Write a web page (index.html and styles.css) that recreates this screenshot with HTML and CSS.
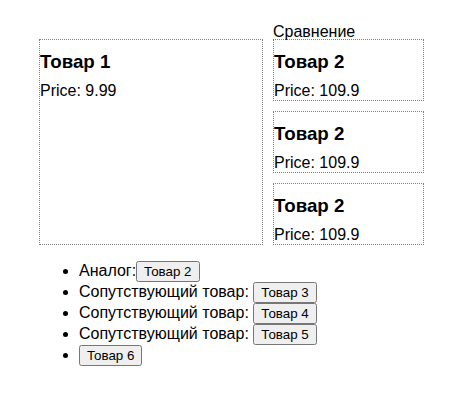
FILE: index.html
```html
<!DOCTYPE html>
<html lang="ru">
<head>
<meta charset="utf-8">
<title>Товары</title>
<link rel="stylesheet" href="styles.css">
</head>
<body>
<div class="page">
  <div class="row">
    <div class="card main">
      <h3 class="title">Товар 1</h3>
      <p class="price">Price: 9.99</p>
    </div>
    <div class="compare">
      <div class="compare-label">Сравнение</div>
      <div class="card">
        <h3 class="title">Товар 2</h3>
        <p class="price">Price: 109.9</p>
      </div>
      <div class="card">
        <h3 class="title">Товар 2</h3>
        <p class="price">Price: 109.9</p>
      </div>
      <div class="card">
        <h3 class="title">Товар 2</h3>
        <p class="price">Price: 109.9</p>
      </div>
    </div>
  </div>
  <ul class="links">
    <li>Аналог:<button class="btn">Товар 2</button></li>
    <li>Сопутствующий товар: <button class="btn">Товар 3</button></li>
    <li>Сопутствующий товар: <button class="btn">Товар 4</button></li>
    <li>Сопутствующий товар: <button class="btn">Товар 5</button></li>
    <li><button class="btn">Товар 6</button></li>
  </ul>
</div>
</body>
</html>
```

FILE: styles.css
```css
html, body {
  margin: 0;
  padding: 0;
  background: #fff;
}

body {
  font-family: "Liberation Sans", Arial, sans-serif;
  font-size: 16px;
  color: #000;
}

.page {
  width: 385px;
  margin-left: 39px;
  padding-top: 39px;
}

.row {
  display: flex;
  gap: 10px;
  align-items: stretch;
}

.card {
  border: 1px dotted #808080;
}

.main {
  width: 224px;
  box-sizing: border-box;
}

.compare {
  position: relative;
  width: 151px;
  display: flex;
  flex-direction: column;
  gap: 10.5px;
}

.compare .card {
  box-sizing: border-box;
}

.compare-label {
  position: absolute;
  top: -16px;
  left: 0;
  white-space: nowrap;
}

.title {
  font-size: 1.17em;
  font-weight: bold;
  margin: 11px 0 8.6px;
}

.price {
  margin: 0;
}

.links {
  margin: 16px 0;
  padding-left: 40px;
}

.btn {
  font-family: "Liberation Sans", Arial, sans-serif;
  font-size: 13.333px;
}
```
